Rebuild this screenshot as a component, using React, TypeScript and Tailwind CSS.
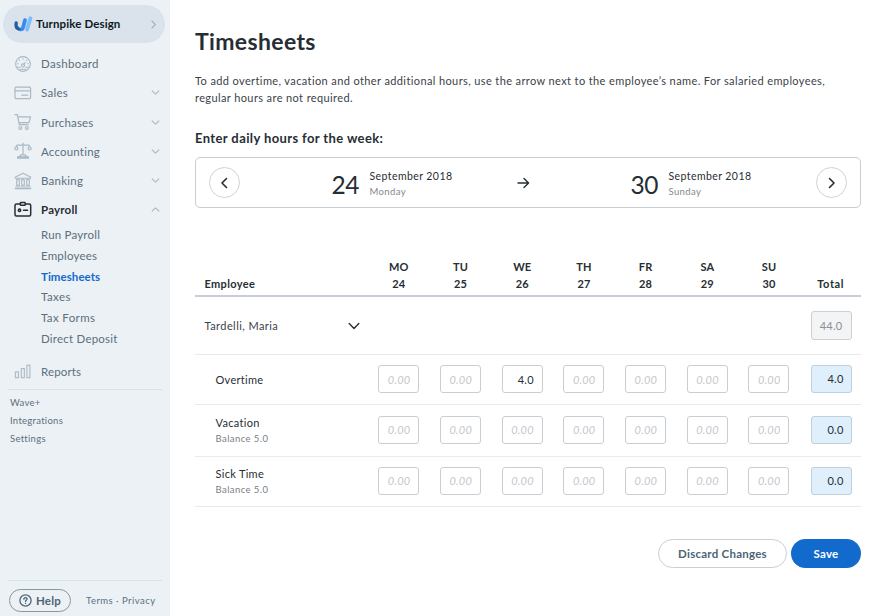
import React, { useState } from 'react';

const days = [
  { key: 'mo', label: 'MO', date: 24 },
  { key: 'tu', label: 'TU', date: 25 },
  { key: 'we', label: 'WE', date: 26 },
  { key: 'th', label: 'TH', date: 27 },
  { key: 'fr', label: 'FR', date: 28 },
  { key: 'sa', label: 'SA', date: 29 },
  { key: 'su', label: 'SU', date: 30 },
];

const payrollLinks = [
  { label: 'Run Payroll', spacing: 'tracking-[0.2px]' },
  { label: 'Employees', spacing: 'tracking-[0.2px]' },
  { label: 'Timesheets', spacing: 'tracking-[0.05px]' },
  { label: 'Taxes', spacing: 'tracking-[0.45px]' },
  { label: 'Tax Forms', spacing: 'tracking-[0.37px]' },
  { label: 'Direct Deposit', spacing: 'tracking-[0.22px]' },
];

const rows = [
  { name: 'Overtime', balance: '', height: 'h-[50px]' },
  { name: 'Vacation', balance: 'Balance 5.0', height: 'h-[51.5px]' },
  { name: 'Sick Time', balance: 'Balance 5.0', height: 'h-[50.5px]' },
];

const DashboardIcon = () => (
  <svg width="18" height="18" viewBox="0 0 18 18" fill="none" stroke="currentColor" strokeWidth="1.1">
    <circle cx="9" cy="9" r="7.4" />
    <path d="M2.2 12.2h4.3M11.5 12.2h4.3M9 3.2v1.6M4.9 4.9l1 1M13.1 4.9l-1 1M3.2 8.8h1.5M13.3 8.8h1.5M9.6 9.4l2-2.2M5.5 14.3h7" />
    <circle cx="9" cy="10.4" r="1.5" />
  </svg>
);

const SalesIcon = () => (
  <svg width="18" height="18" viewBox="0 0 18 18" fill="none" stroke="currentColor" strokeWidth="1.2">
    <rect x="1" y="3.2" width="15.6" height="11.4" rx="1.2" />
    <path d="M1 6.8h15.6M7.2 11.2h7" />
  </svg>
);

const PurchasesIcon = () => (
  <svg width="18" height="18" viewBox="0 0 18 18" fill="none" stroke="currentColor" strokeWidth="1.2" strokeLinejoin="round">
    <path d="M.6 1.7h2.7l2 10h9.3M3.7 3.8h12.9l-1.7 5.9H5" />
    <circle cx="6.3" cy="14.9" r="1.4" />
    <circle cx="12.8" cy="14.9" r="1.4" />
  </svg>
);

const AccountingIcon = () => (
  <svg width="18" height="18" viewBox="0 0 18 18" fill="none" stroke="currentColor" strokeWidth="1.2">
    <path d="M9 .8v11.4M2.6 3.2h12.8M5.6 14.9c0-1.6 1.2-2.3 3.4-2.3s3.4.7 3.4 2.3M3.6 16.2v-1.3h10.8v1.3z" />
    <circle cx="2.4" cy="6.4" r="1.5" />
    <circle cx="15.6" cy="6.4" r="1.5" />
    <path d="M2.6 3.2v1.7M15.4 3.2v1.7" />
  </svg>
);

const BankingIcon = () => (
  <svg width="18" height="18" viewBox="0 0 18 18" fill="none" stroke="currentColor" strokeWidth="1.1" strokeLinejoin="round">
    <path d="M1.4 5.1L9 1.2l7.6 3.9v1.2H1.4zM1.2 15h15.6M.8 16.6h16.4" />
    <rect x="2.7" y="7.6" width="2.6" height="5.8" />
    <rect x="7.7" y="7.6" width="2.6" height="5.8" />
    <rect x="12.7" y="7.6" width="2.6" height="5.8" />
  </svg>
);

const PayrollIcon = () => (
  <svg width="18" height="18" viewBox="0 0 18 18" fill="none" stroke="currentColor" strokeWidth="1.5" strokeLinejoin="round" strokeLinecap="round">
    <path d="M6 2.9H2.5A1.5 1.5 0 0 0 1 4.4v9a1.5 1.5 0 0 0 1.5 1.5h12.7a1.5 1.5 0 0 0 1.5-1.5v-9a1.5 1.5 0 0 0-1.5-1.5h-3.5" />
    <rect x="6.4" y="1.4" width="4.8" height="2.9" rx=".6" />
    <circle cx="5.5" cy="9.3" r="1.2" />
    <path d="M9.5 9.3h4" />
  </svg>
);

const ReportsIcon = () => (
  <svg width="18" height="18" viewBox="0 0 18 18" fill="none" stroke="currentColor" strokeWidth="1.1">
    <rect x="1.4" y="8.9" width="3" height="5.8" />
    <rect x="7.3" y="5.6" width="3" height="9.1" />
    <rect x="12.9" y="2.2" width="3" height="12.5" />
  </svg>
);

const Chevron = ({ d, size, width }: { d: string; size: number; width: number }) => (
  <svg width={size} height={size} viewBox="0 0 12 12" fill="none" stroke="currentColor" strokeWidth={width} strokeLinecap="round" strokeLinejoin="round">
    <path d={d} />
  </svg>
);

const DOWN = 'M1.6 4L6 8.2 10.4 4';
const UP = 'M1.6 8L6 3.8 10.4 8';
const LEFT = 'M7.5 1.5L3 6 7.5 10.5';
const RIGHT = 'M4 1.5L8.5 6 4 10.5';
const NEXT = 'M3.5 1.5L8 6 3.5 10.5';

const navItems = [
  { label: 'Dashboard', icon: <DashboardIcon />, arrow: '', spacing: 'tracking-[0.34px]' },
  { label: 'Sales', icon: <SalesIcon />, arrow: DOWN, spacing: 'tracking-[0.28px]' },
  { label: 'Purchases', icon: <PurchasesIcon />, arrow: DOWN, spacing: 'tracking-[0.18px]' },
  { label: 'Accounting', icon: <AccountingIcon />, arrow: DOWN, spacing: 'tracking-[0.2px]' },
  { label: 'Banking', icon: <BankingIcon />, arrow: DOWN, spacing: 'tracking-[0.25px]' },
];

const NavItem = ({ label, icon, arrow, spacing }: { label: string; icon: React.ReactNode; arrow: string; spacing: string }) => (
  <a className="flex h-[29.2px] items-center pl-3.5 pr-2.5 text-[#5b6f7d]">
    <span className="w-[27px] text-[#aab9c4]">{icon}</span>
    <span className={`flex-1 text-[11.5px] ${spacing}`}>{label}</span>
    {arrow && <span className="text-[#adbfcc]"><Chevron d={arrow} size={9} width={1.6} /></span>}
  </a>
);

const Sidebar = () => (
  <aside className="flex w-[170px] shrink-0 flex-col bg-[#ecf1f5]">
    <div className="ml-[3px] mt-[5px] flex h-[38px] w-[162px] items-center rounded-full bg-[#dae2eb] pl-[10px] pr-[7px]">
      <svg width="20" height="18" viewBox="0 0 20 18" fill="none" strokeLinecap="round">
        <path d="M14 14.6L17.4 3.2" stroke="#7cc0fb" strokeWidth="3.8" />
        <path d="M7.8 14.4c1.2 0 1.9-.6 2.2-1.8L12 5.2" stroke="#3a8af2" strokeWidth="3.8" />
        <path d="M3.2 8c-.5 2.4.2 5 2.6 6" stroke="#245f9e" strokeWidth="3.4" />
      </svg>
      <span className="ml-[3px] flex-1 whitespace-nowrap pb-px text-[11.5px] font-bold tracking-[0.12px] text-[#0f1a24]">Turnpike Design</span>
      <span className="text-[#97a7b5]"><Chevron d={RIGHT} size={9} width={1.4} /></span>
    </div>
    <nav className="mt-[6.2px]">
      {navItems.map(item => <NavItem key={item.label} {...item} />)}
      <a className="flex h-[29.2px] items-center pl-3.5 pr-2.5 text-[#262e34]">
        <span className="w-[27px]"><PayrollIcon /></span>
        <span className="flex-1 text-[11.5px] font-bold tracking-[0.2px]">Payroll</span>
        <span className="text-[#adbfcc]"><Chevron d={UP} size={9} width={1.6} /></span>
      </a>
      <ul className="pl-[41px]">
        {payrollLinks.map(link => (
          <li
            key={link.label}
            className={`flex h-[20.8px] items-center text-[11.5px] ${link.spacing} ${link.label === 'Timesheets' ? 'font-bold text-[#136acd]' : 'text-[#5b6f7d]'}`}
          >
            {link.label}
          </li>
        ))}
      </ul>
      <div className="mt-2">
        <NavItem label="Reports" icon={<ReportsIcon />} arrow="" spacing="tracking-[0.15px]" />
      </div>
    </nav>
    <ul className="mx-2 mt-[3px] border-t border-[#d8e2ea] pl-[2px] pt-[3.5px] text-[9.5px] tracking-[0.28px] text-[#5b6f7d]">
      <li className="flex h-[18px] items-center">Wave+</li>
      <li className="flex h-[18px] items-center">Integrations</li>
      <li className="flex h-[18px] items-center">Settings</li>
    </ul>
    <div className="mx-2 mt-auto flex h-[36px] items-center border-t border-[#dae2e9] pt-[4px] text-[#5b6f7d]">
      <button className="ml-px flex h-[23px] w-[62px] items-center justify-center gap-[4px] rounded-full border border-[#8697a2] text-[11.5px] font-bold tracking-[0.2px] text-[#4d6575]">
        <svg width="13" height="13" viewBox="0 0 13 13" fill="none" stroke="currentColor" strokeWidth="1.3" strokeLinecap="round">
          <circle cx="6.5" cy="6.5" r="5.6" />
          <path d="M4.9 5.2c0-1 .7-1.6 1.6-1.6s1.6.6 1.6 1.5c0 1.1-1.6 1.2-1.6 2.4M6.5 9.3v.1" />
        </svg>
        Help
      </button>
      <span className="ml-[15px] whitespace-nowrap pt-[2px] text-[9.5px] tracking-[0.47px]">Terms · Privacy</span>
    </div>
  </aside>
);

const DateBlock = ({ date, day }: { date: string; day: string }) => (
  <div className="flex items-center">
    <span className="w-[38px] pt-[5px] text-[24.5px] leading-none tracking-[-0.4px] text-[#262e34]">{date}</span>
    <div className="w-[84px] whitespace-nowrap pt-[3px]">
      <div className="text-[10.5px] leading-4 tracking-[0.42px] text-[#262e34]">September 2018</div>
      <div className="text-[9.5px] leading-4 tracking-[0.38px] text-[#86898c]">{day}</div>
    </div>
  </div>
);

export default function App() {
  const [hours, setHours] = useState<{ [key: string]: string }>({ 'Overtime-we': '4.0' });

  const total = (name: string) =>
    days.reduce((sum, day) => sum + (parseFloat(hours[`${name}-${day.key}`]) || 0), 0).toFixed(1);

  return (
    <div className="flex h-[616px] w-[879px] overflow-hidden bg-white font-['Lato',sans-serif] text-[#262e34]">
      <Sidebar />
      <main className="w-[691px] shrink-0 pl-[25px]">
        <h1 className="mt-[26px] text-[23px] font-bold leading-[30px] tracking-[0.35px]">Timesheets</h1>
        <p className="mt-[16px] whitespace-nowrap text-[11px] leading-[17px] tracking-[0.39px] text-[#3a4248]">
          To add overtime, vacation and other additional hours, use the arrow next to the employee’s name. For salaried employees,
          <br />
          regular hours are not required.
        </p>
        <h2 className="mt-[22px] text-[13px] font-bold leading-[20px] tracking-[0.39px]">Enter daily hours for the week:</h2>

        <div className="mt-[9px] flex h-[51px] items-center rounded-[5px] border border-[#c9ced2] px-[13px]">
          <button className="flex size-[31px] items-center justify-center rounded-full border border-[#d0d3d6]">
            <Chevron d={LEFT} size={12} width={1.6} />
          </button>
          <div className="ml-[91.5px]"><DateBlock date="24" day="Monday" /></div>
          <svg className="ml-[63.5px]" width="13" height="12" viewBox="0 0 13 12" fill="none" stroke="currentColor" strokeWidth="1.4" strokeLinecap="round" strokeLinejoin="round">
            <path d="M1 6h10.6M7 1.4L11.6 6 7 10.6" />
          </svg>
          <div className="ml-[100.5px]"><DateBlock date="30" day="Sunday" /></div>
          <button className="ml-auto flex size-[31px] items-center justify-center rounded-full border border-[#d0d3d6]">
            <Chevron d={NEXT} size={12} width={1.6} />
          </button>
        </div>

        <div className="mt-[50px] grid h-[39px] grid-cols-[173px_repeat(8,61.7px)] items-end border-b-2 border-[#c8ccd4] pb-[3px] text-[11px] font-bold leading-[17px]">
          <div className="pl-[9.5px] tracking-[0.35px]">Employee</div>
          {days.map(day => (
            <div key={day.key} className="text-center tracking-[0.1px]">
              {day.label}<br />{day.date}
            </div>
          ))}
          <div className="text-center tracking-[0.6px]">Total</div>
        </div>

        <div className="flex h-[58px] items-center border-b border-[#e9ebed] pl-[9.5px] pr-[9.5px] text-[11px]">
          <span className="w-[143.5px] pt-px tracking-[0.43px] text-[#3a4248]">Tardelli, Maria</span>
          <Chevron d="M1.2 3.6L6 8.4l4.8-4.8" size={12} width={1.4} />
          <span className="ml-auto flex h-[28.5px] w-[41px] items-center justify-center rounded-[3px] border border-[#cdd0d3] bg-[#f3f4f5] pt-px tracking-[0.2px] text-[#8b8f93]">44.0</span>
        </div>

        {rows.map(row => (
          <div key={row.name} className={`grid ${row.height} grid-cols-[173px_repeat(8,61.7px)] items-center border-b border-[#e9ebed]`}>
            <div className="pl-[20.5px]">
              <div className="text-[11px] leading-[17px] tracking-[0.3px]">{row.name}</div>
              {row.balance && <div className="text-[9.5px] leading-4 tracking-[0.42px] text-[#7b8084]">{row.balance}</div>}
            </div>
            {days.map(day => (
              <input
                key={day.key}
                placeholder="0.00"
                value={hours[`${row.name}-${day.key}`] || ''}
                onChange={e => setHours(prev => ({ ...prev, [`${row.name}-${day.key}`]: e.target.value }))}
                className="mb-px h-[28px] w-[41px] justify-self-center rounded-[3px] border border-[#c9ced4] bg-white pr-[8px] text-right text-[11px] tracking-[0.2px] outline-none placeholder:italic placeholder:text-[#c3c7cb]"
              />
            ))}
            <span className="mb-px ml-[10.7px] flex h-[28px] w-[41px] items-center justify-end rounded-[3px] border border-[#bed0dc] bg-[#dfeffb] pr-[7px] pt-px text-[11px] tracking-[0.2px]">
              {total(row.name)}
            </span>
          </div>
        ))}

        <div className="mt-[32px] flex justify-end gap-[4px] text-[11.5px] font-bold tracking-[0.25px]">
          <button className="h-[29px] w-[129px] rounded-full border border-[#c8d0d6] pt-px text-[#4d6575]">Discard Changes</button>
          <button className="h-[29px] w-[70px] rounded-full bg-[#136acd] pt-px text-white">Save</button>
        </div>
      </main>
    </div>
  );
}
